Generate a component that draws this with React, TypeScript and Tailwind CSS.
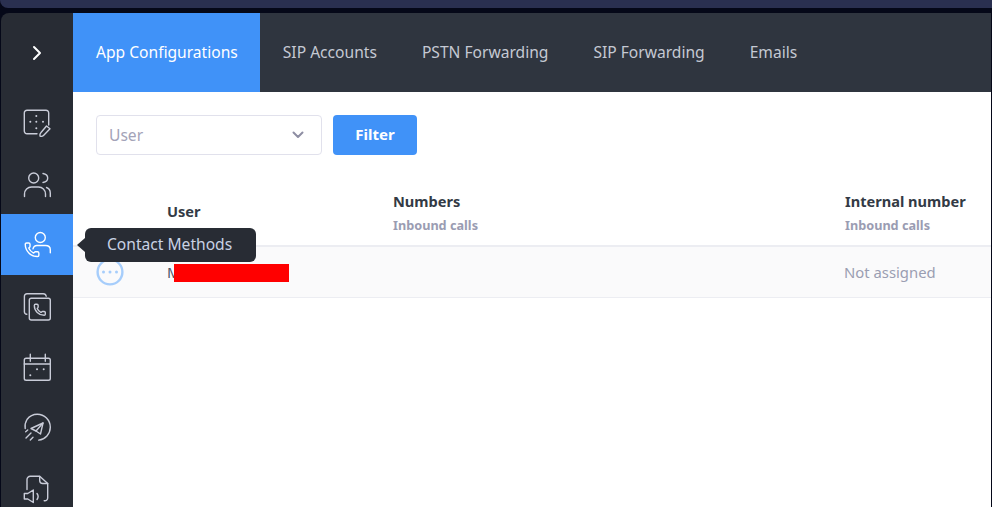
const tabs = ['SIP Accounts', 'PSTN Forwarding', 'SIP Forwarding', 'Emails']

function Icon({ children }: { children: React.ReactNode }) {
  return (
    <svg width="30" height="30" viewBox="0 0 30 30" fill="none" stroke="currentColor" strokeWidth="1.4" strokeLinecap="round" strokeLinejoin="round">
      {children}
    </svg>
  )
}

const phone = 'M13.832 16.568a1 1 0 0 0 1.213-.303l.355-.465A2 2 0 0 1 17 15h3a2 2 0 0 1 2 2v3a2 2 0 0 1-2 2A18 18 0 0 1 2 4a2 2 0 0 1 2-2h3a2 2 0 0 1 2 2v3a2 2 0 0 1-.8 1.6l-.468.351a1 1 0 0 0-.292 1.233 14 14 0 0 0 6.392 6.384'

const sideIcons = [
  <Icon key="grid">
    <path d="M15 25.700H5A2.700 2.700 0 0 1 2.300 23V5A2.700 2.700 0 0 1 5 2.300h19A2.700 2.700 0 0 1 26.700 5v12" />
    <path d="M24.500 18l3.500 2.800-6.500 6.700c-.5.500-2.500 1-3.500.7-.2-1 .3-3 .8-3.500z" />
    <g strokeWidth="2">
      <path d="M14.300 8h.01M8.300 13.700h.01M14.300 13.700h.01M21 13.700h.01M14.300 20.300h.01" />
    </g>
  </Icon>,
  <Icon key="users">
    <circle cx="11.700" cy="9" r="5" />
    <path d="M21 4.500c2.800.500 4.700 2.300 4.700 4.500s-1.900 4-4.700 4.500" />
    <path d="M2.500 27.500v-2.500a7 7 0 0 1 7-7h7a7 7 0 0 1 7 7v2.500" />
    <path d="M24.500 18.500a6 6 0 0 1 3.800 5.500v3.500" />
  </Icon>,
  <Icon key="contact">
    <circle cx="18.300" cy="7.500" r="5" />
    <path d="M11 18.800c.5-2 1.800-3.300 4-3.300h8.500c2.800 0 4.800 1.700 4.800 4.300v3" />
    <path d={phone} transform="translate(1.900 11.600) scale(0.680)" strokeWidth="2.100" />
  </Icon>,
  <Icon key="calls">
    <path d="M4.800 23.300A2.600 2.600 0 0 1 2.400 21V5.500A2.600 2.600 0 0 1 5 2.800h16.200a3 3 0 0 1 3 2.400" />
    <rect x="7.300" y="7.300" width="21" height="21.700" rx="2" />
    <path d={phone} transform="translate(11.200 12.200) scale(0.550)" strokeWidth="2.500" />
  </Icon>,
  <Icon key="calendar">
    <rect x="2.300" y="6.300" width="26" height="22" rx="1.800" />
    <path d="M2.300 12h26M8.300 2.300v7M23.300 2.300v7" />
    <g strokeWidth="2">
      <path d="M15 17.300h.01M21.700 17.300h.01M8.300 23.300h.01" />
    </g>
  </Icon>,
  <Icon key="send">
    <path d="M3.200 15.500a13 13 0 0 1 1.800-9A13 13 0 0 1 15.300 1.300a13 13 0 0 1 13 13 13 13 0 0 1-11.600 12.800" />
    <path d="M21 10L9 15.500l5 2.500 4.500 3z" />
    <path d="M14 18l7-8" />
    <path d="M4 25l5-5M8.300 27l2.700-2.700M3.700 18.700l2-1.700" />
  </Icon>,
  <Icon key="file">
    <path d="M5 15.500V5.500A3.300 3.300 0 0 1 8.300 2.200h9.400l8 7.300v14.500a2.800 2.800 0 0 1-3.500 2.700" />
    <path d="M17.700 2.500V6.500a3 3 0 0 0 3 3h5" />
    <path d="M2.300 19.500h3.500l5.500-3.500v12.500l-5.500-3.500H2.300z" />
    <path d="M15 19.500c1.500 2 1.500 4 0 6" />
  </Icon>,
]

export default function App() {
  return (
    <div className="h-[507px] w-[992px] overflow-hidden bg-[#050818] font-['Noto_Sans',sans-serif]">
      <div className="h-2 rounded-bl-lg bg-[#2a3050]" />
      <div className="mt-[5px] flex h-[494px] pl-px pr-px">
        {/* Sidebar */}
        <aside className="flex w-[72px] shrink-0 flex-col overflow-hidden rounded-tl-lg bg-[#282c34] text-[#c9ccd8]">
          <div className="flex h-[79px] shrink-0 items-center justify-center text-white">
            <svg width="14" height="16" viewBox="0 0 14 16" fill="none" stroke="currentColor" strokeWidth="2" strokeLinecap="round" strokeLinejoin="round">
              <path d="M4 2l6 6-6 6" />
            </svg>
          </div>
          {sideIcons.map((icon, i) => (
            <div
              key={i}
              className={i === 2 ? 'flex h-[61px] shrink-0 items-center justify-center bg-[#4092f8] text-white' : 'flex h-[61px] shrink-0 items-center justify-center'}
            >
              {icon}
            </div>
          ))}
        </aside>

        <div className="relative min-w-0 flex-1 bg-white">
          {/* Tabs */}
          <nav className="flex h-[79px] bg-[#2f353f] text-[15.6px] text-[#c5c9d3]">
            <div className="flex items-center bg-[#4092f8] pl-[23px] pr-[22px] pt-px text-white">App Configurations</div>
            {tabs.map((t) => (
              <div key={t} className="flex items-center pl-[23px] pr-[22px] pt-px">{t}</div>
            ))}
          </nav>

          {/* Filter */}
          <div className="flex gap-[11px] pl-[23px] pt-[23px]">
            <div className="flex h-10 w-[226px] items-center justify-between rounded border border-[#e1e1ec] pl-3 pr-[17px] text-[15.6px] text-[#a3a3b8]">
              <span className="pt-px">User</span>
              <svg width="12" height="8" viewBox="0 0 12 8" fill="none" stroke="#8e8ea3" strokeWidth="2" strokeLinecap="round" strokeLinejoin="round">
                <path d="M1.500 1.500L6 6l4.500-4.500" />
              </svg>
            </div>
            <button className="h-10 w-[84px] rounded bg-[#4092f8] pb-[2px] text-[15px] font-bold text-white">Filter</button>
          </div>

          {/* Table */}
          <div className="mt-[35px] grid h-[57px] grid-cols-[94px_226px_452px_1fr] border-b-2 border-[#ecedf2] text-[14.6px] font-bold leading-5 text-[#333a45]">
            <div />
            <div className="pt-[11px]">User</div>
            <div className="pt-px">
              <div>Numbers</div>
              <div className="mt-[6px] text-[12.7px] leading-4 text-[#9a9cb2]">Inbound calls</div>
            </div>
            <div className="pt-px">
              <div>Internal number</div>
              <div className="mt-[6px] text-[12.7px] leading-4 text-[#9a9cb2]">Inbound calls</div>
            </div>
          </div>
          <div className="grid h-[51px] grid-cols-[94px_226px_452px_1fr] items-center border-b border-[#ecedf2] bg-[#fafafb] text-[14.85px] text-[#4a5568]">
            <div className="pl-[23px]">
              <svg width="28" height="28" viewBox="0 0 28 28" fill="none" className="block">
                <circle cx="14" cy="14" r="12.400" stroke="#a6cdfb" strokeWidth="2.400" />
                <circle cx="7.500" cy="14" r="1.500" fill="#a6cdfb" />
                <circle cx="14" cy="14" r="1.500" fill="#a6cdfb" />
                <circle cx="20.500" cy="14" r="1.500" fill="#a6cdfb" />
              </svg>
            </div>
            <div className="relative">
              M
              <span className="absolute left-[7px] top-[3px] h-[18px] w-[115px] bg-[#ff0000]" />
            </div>
            <div />
            <div className="-ml-px text-[#9a9eb2]">Not assigned</div>
          </div>

          {/* Tooltip */}
          <div className="absolute left-[12px] top-[215px] flex h-[34px] w-[171px] items-center rounded-md bg-[#282c34] pb-px pl-[22px] text-[15.6px] text-[#c9d2e4]">
            Contact Methods
            <span className="absolute left-[-8px] top-[10px] h-0 w-0 border-y-[7px] border-r-[8px] border-y-transparent border-r-[#282c34]" />
          </div>
        </div>
      </div>
    </div>
  )
}
